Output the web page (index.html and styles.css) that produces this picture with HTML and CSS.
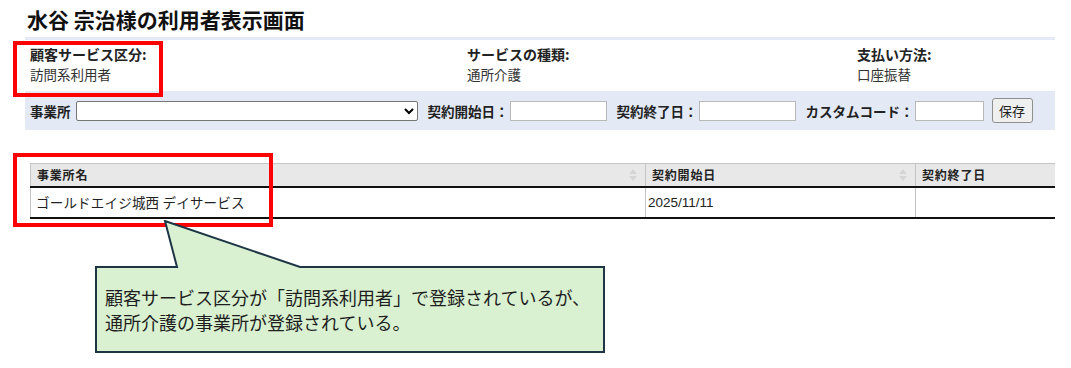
FILE: index.html
```html
<!DOCTYPE html>
<html lang="ja">
<head>
<meta charset="utf-8">
<title>利用者表示画面</title>
<link rel="stylesheet" href="styles.css">
</head>
<body>
<div class="page">
  <h1 class="title">水谷 宗治様の利用者表示画面</h1>
  <div class="info">
    <div class="info-item">
      <div class="info-label">顧客サービス区分:</div>
      <div class="info-value">訪問系利用者</div>
    </div>
    <div class="info-item">
      <div class="info-label">サービスの種類:</div>
      <div class="info-value">通所介護</div>
    </div>
    <div class="info-item">
      <div class="info-label">支払い方法:</div>
      <div class="info-value">口座振替</div>
    </div>
  </div>
  <div class="filter">
    <span class="f-label">事業所</span>
    <select class="f-select"><option></option></select>
    <span class="f-label f-gap">契約開始日：</span>
    <input class="f-input f-date" type="text">
    <span class="f-label f-gap">契約終了日：</span>
    <input class="f-input f-date" type="text">
    <span class="f-label f-gap">カスタムコード：</span>
    <input class="f-input f-code" type="text">
    <button class="f-btn" type="button">保存</button>
  </div>
  <table class="grid">
    <thead>
      <tr>
        <th class="c1"><div class="th-in"><span>事業所名</span><span class="sort"><i class="up"></i><i class="dn"></i></span></div></th>
        <th class="c2"><div class="th-in"><span>契約開始日</span><span class="sort"><i class="up"></i><i class="dn"></i></span></div></th>
        <th class="c3"><div class="th-in"><span>契約終了日</span></div></th>
      </tr>
    </thead>
    <tbody>
      <tr>
        <td>ゴールドエイジ城西 デイサービス</td>
        <td class="num">2025/11/11</td>
        <td></td>
      </tr>
    </tbody>
  </table>
</div>

<div class="mark mark-1"></div>
<div class="mark mark-2"></div>

<div class="callout">
  <svg class="callout-shape" width="512" height="134" viewBox="0 0 512 134">
    <path d="M1 47 L82 47 L70 1 L205 47 L509 47 L509 132 L1 132 Z" fill="#d9f1d1" stroke="#1d3545" stroke-width="2" stroke-linejoin="miter"/>
  </svg>
  <div class="callout-text">顧客サービス区分が「訪問系利用者」で登録されているが、<br>通所介護の事業所が登録されている。</div>
</div>
</body>
</html>
```

FILE: styles.css
```css
html, body {
  margin: 0;
  padding: 0;
  background: #ffffff;
}
body {
  font-family: "Noto Sans CJK JP", "Liberation Sans", sans-serif;
  color: #222;
  width: 1071px;
  height: 368px;
  overflow: hidden;
  position: relative;
}
.page {
  padding: 6px 0 0 25px;
  width: 1030px;
}
.title {
  margin: 0 0 5px 2px;
  font-size: 21px;
  line-height: 26px;
  font-weight: bold;
  color: #111;
}
.info {
  border-top: 3px solid #e3eaf6;
  display: grid;
  grid-template-columns: 437px 390px 1fr;
  padding: 4px 5px 7px;
}
.info-label {
  font-size: 14px;
  line-height: 20px;
  font-weight: bold;
  color: #222;
}
.info-value {
  font-size: 13.5px;
  line-height: 20px;
  color: #333;
}
.filter {
  background: #e3eaf6;
  height: 39px;
  display: flex;
  align-items: center;
  padding-left: 5px;
}
.f-label {
  font-size: 13.5px;
  font-weight: bold;
  color: #222;
  white-space: nowrap;
}
.f-gap {
  margin-left: 10px;
}
.f-select {
  margin-left: 5px;
  width: 342px;
  height: 20px;
  border: 1px solid #767676;
  border-radius: 2px;
  background: #fff;
  font-size: 12px;
  padding: 0;
}
.f-input {
  margin-left: 1px;
  height: 20px;
  box-sizing: border-box;
  border: 1px solid #b9b9b9;
  background: #fff;
  padding: 0 2px;
  font-size: 12px;
}
.f-date {
  width: 97px;
}
.f-code {
  width: 69px;
}
.f-btn {
  margin-left: 8px;
  width: 41px;
  height: 25px;
  box-sizing: border-box;
  border: 1px solid #8f8f8f;
  border-radius: 3px;
  background: #efefef;
  font-family: "Noto Sans CJK JP", sans-serif;
  font-size: 13px;
  color: #222;
  padding: 0;
}
.grid {
  margin: 33px 0 0 5px;
  width: 1025px;
  border-collapse: collapse;
  table-layout: fixed;
}
.grid th {
  box-sizing: border-box;
  background: #e8e8e8;
  border-top: 1px solid #c4c4c4;
  border-left: 1px solid #c4c4c4;
  border-bottom: 2px solid #111;
  height: 23px;
  padding: 0 8px 0 6px;
  text-align: left;
  font-size: 12px;
  font-weight: bold;
  letter-spacing: 0.8px;
  color: #222;
}
.grid .c1 { width: 615px; }
.grid .c2 { width: 270px; }
.th-in {
  display: flex;
  justify-content: space-between;
  align-items: center;
}
.sort {
  display: flex;
  flex-direction: column;
  gap: 2px;
}
.sort i {
  display: block;
  width: 0;
  height: 0;
  border-left: 4px solid transparent;
  border-right: 4px solid transparent;
}
.sort .up {
  border-bottom: 5px solid #d6d6d6;
}
.sort .dn {
  border-top: 5px solid #d6d6d6;
}
.grid td {
  height: 31px;
  box-sizing: border-box;
  border-left: 1px solid #c4c4c4;
  border-bottom: 2px solid #111;
  padding: 0 5px;
  font-size: 13.5px;
  letter-spacing: 0.2px;
  color: #222;
}
.grid td.num {
  font-family: "Liberation Sans", Arial, sans-serif;
  font-size: 13.5px;
  letter-spacing: 0;
  padding-left: 2px;
}
.mark {
  position: absolute;
  border: 4px solid #ff0000;
  box-sizing: border-box;
}
.mark-1 {
  left: 13px;
  top: 41px;
  width: 150px;
  height: 56px;
}
.mark-2 {
  left: 13px;
  top: 153px;
  width: 260px;
  height: 74px;
}
.callout {
  position: absolute;
  left: 95px;
  top: 220px;
  width: 512px;
  height: 134px;
}
.callout-shape {
  position: absolute;
  left: 0;
  top: 0;
}
.callout-text {
  position: absolute;
  left: 10px;
  top: 65px;
  font-size: 18px;
  line-height: 25px;
  color: #1e1e1e;
  white-space: nowrap;
}
```
